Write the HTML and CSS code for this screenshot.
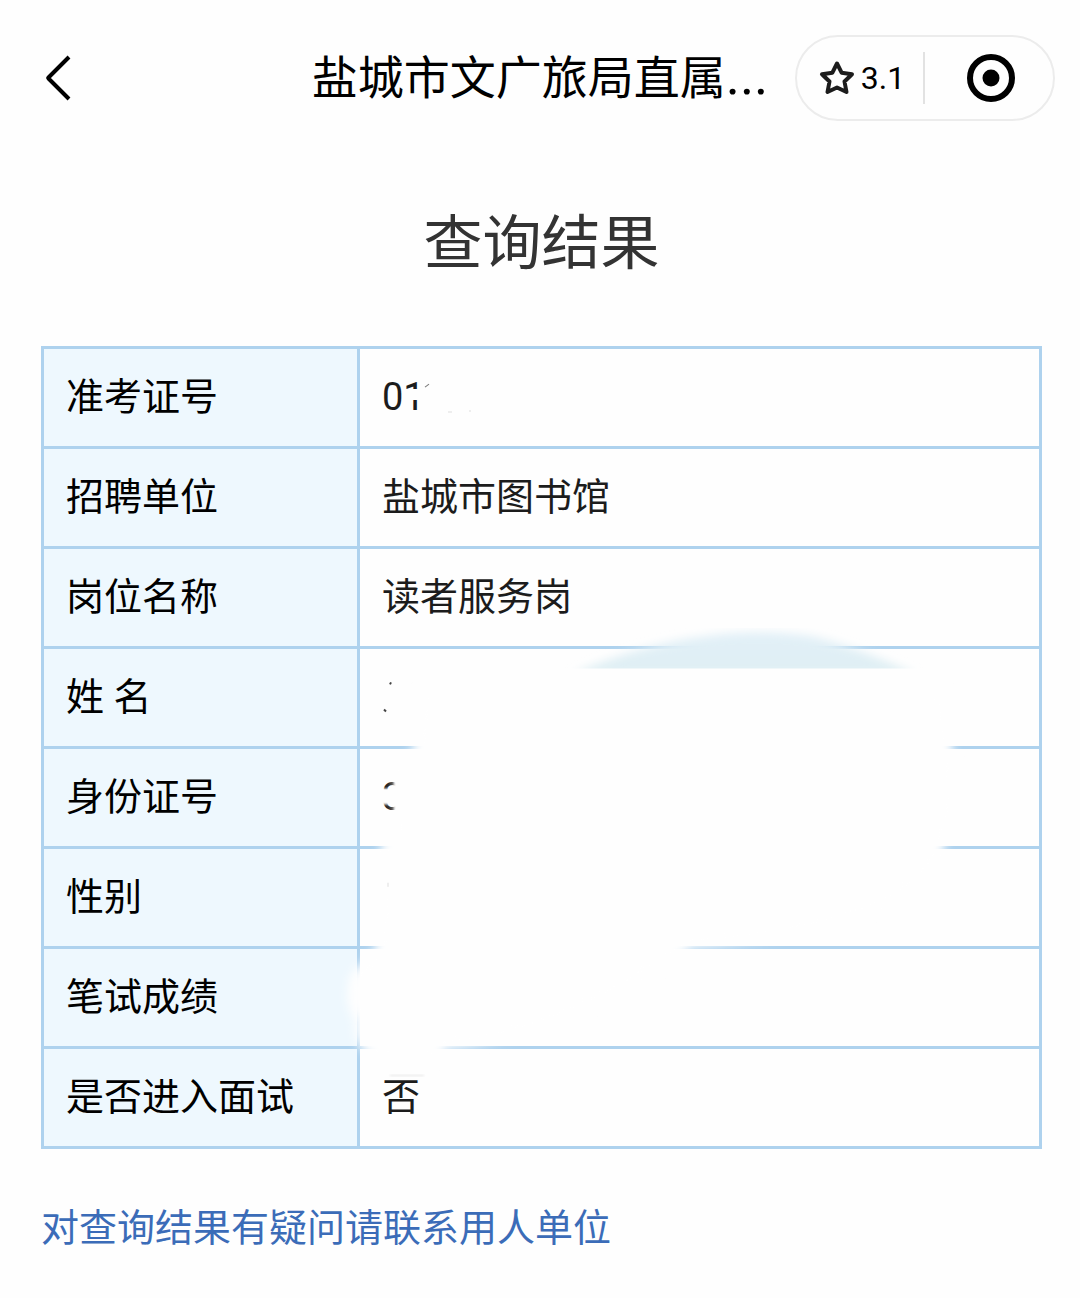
FILE: index.html
```html
<!DOCTYPE html>
<html lang="zh-CN">
<head>
<meta charset="utf-8">
<meta name="viewport" content="width=device-width, initial-scale=1">
<title>查询结果</title>
<link rel="stylesheet" href="styles.css">
</head>
<body>
<header class="nav">
  <button class="back" type="button" aria-label="返回">
    <svg width="30" height="48" viewBox="0 0 30 48" fill="none" stroke="#000" stroke-width="4" stroke-linejoin="round"><path d="M27 3 6.500 23.500Q6 24 6.500 24.500L27 45"/></svg>
  </button>
  <div class="nav-title">盐城市文广旅局直属<span class="dots">...</span></div>
  <div class="capsule">
    <button class="rate" type="button" aria-label="评分 3.1">
      <svg width="36" height="36" viewBox="0 0 36 36" fill="none" stroke="#1c1c1c" stroke-width="4" stroke-linejoin="round"><path d="M18 3.500 22.600 12.700 33 14.200 25.500 21.500 27.500 32 18 27.500 8.500 32 10.500 21.500 3 14.200 13.400 12.700Z"/></svg>
      <span>3.1</span>
    </button>
    <button class="close" type="button" aria-label="关闭">
      <svg width="48" height="48" viewBox="0 0 48 48"><circle cx="24" cy="24" r="21" fill="none" stroke="#000" stroke-width="6"/><circle cx="24" cy="24" r="8.500"/></svg>
    </button>
  </div>
</header>
<main class="page">
  <h1 class="heading">查询结果</h1>
  <div class="result">
    <table class="info">
      <tbody>
        <tr><th scope="row">准考证号</th><td>01</td></tr>
        <tr><th scope="row">招聘单位</th><td>盐城市图书馆</td></tr>
        <tr><th scope="row">岗位名称</th><td>读者服务岗</td></tr>
        <tr><th scope="row">姓 名</th><td></td></tr>
        <tr><th scope="row">身份证号</th><td>3</td></tr>
        <tr><th scope="row">性别</th><td></td></tr>
        <tr><th scope="row">笔试成绩</th><td></td></tr>
        <tr><th scope="row">是否进入面试</th><td>否</td></tr>
      </tbody>
    </table>
    <svg class="cover" viewBox="41 346 1001 802" preserveAspectRatio="none" aria-hidden="true">
      <defs>
        <filter id="soft" x="-10%" y="-10%" width="120%" height="120%"><feGaussianBlur stdDeviation="5"/></filter>
        <filter id="fine" x="-20%" y="-20%" width="140%" height="140%"><feGaussianBlur stdDeviation="1"/></filter>
        <clipPath id="cap"><rect x="540" y="610" width="400" height="58"/></clipPath>
        <linearGradient id="tint" x1="0" y1="0" x2="0" y2="1"><stop offset="0" stop-color="#e2f0f8"/><stop offset="1" stop-color="#dfeff3"/></linearGradient>
      </defs>
      <!-- erased digits of the exam number -->
      <path d="M405 391 412 389H424V400H405Z" fill="#fefefe"/>
      <path d="M425 387 429 384" stroke="#777" stroke-width="1"/>
      <path d="M448 412H452M469 411H471" stroke="#ddd" stroke-width="1"/>
      <!-- tinted arc -->
      <g clip-path="url(#cap)"><path d="M572 674Q640 644 705 636Q760 628 812 636Q855 646 916 674Z" fill="url(#tint)" filter="url(#soft)"/></g>
      <!-- erased personal details -->
      <path d="M420 690H945L952 747Q965 800 944 847Q920 930 692 947Q560 1040 446 1048L438 1060H378L362 1048Q352 1036 355 1020Q345 1005 348 985Q348 972 362 962L376 947 380 900V847L395 825V770L414 747Z" fill="#fefefe" filter="url(#soft)"/>
      <path d="M382 788H412V804H382ZM394 775H412V820H394Z" fill="#fefefe" filter="url(#fine)"/>
      <path d="M390 684 391 682M384 709 386 711" stroke="#444" stroke-width="2"/>
      <path d="M388 882V886" stroke="#ddd" stroke-width="1"/>
      <path d="M390 1074H424V1075H390Z" fill="#ddd" filter="url(#fine)"/>
    </svg>
  </div>
  <a class="contact" href="#contact">对查询结果有疑问请联系用人单位</a>
</main>
</body>
</html>
```
FILE: styles.css
```css
* {
  box-sizing: border-box;
}

body {
  margin: 0;
  background: #fefefe;
  color: #000;
  font-family: Roboto, "Noto Sans CJK SC", sans-serif;
}

button {
  padding: 0;
  border: 0;
  background: none;
  color: inherit;
  font: inherit;
  cursor: pointer;
}

svg {
  display: block;
}

.nav {
  display: grid;
  grid-template-columns: 1fr auto 1fr;
  align-items: center;
  height: 156px;
  padding: 0 25px;
}

.back {
  justify-self: start;
  padding: 0 17px;
}

.nav-title {
  padding-bottom: 8px;
  font-family: "Noto Sans CJK SC", sans-serif;
  font-size: 46px;
  line-height: 60px;
  white-space: nowrap;
}

.dots {
  font-family: Roboto, sans-serif;
  font-size: 54px;
  line-height: 1;
}

.capsule {
  justify-self: end;
  display: grid;
  grid-template-columns: 1fr 1fr;
  align-items: center;
  width: 260px;
  height: 86px;
  border: 2px solid #ececec;
  border-radius: 43px;
}

.rate,
.close {
  display: flex;
  align-items: center;
  justify-content: center;
  height: 52px;
  padding-left: 4px;
}

.rate {
  gap: 6px;
  border-right: 2px solid #e2e2e2;
  font-size: 32px;
}

.page {
  padding: 48px 38px 40px 41px;
}

.heading {
  margin: 0 0 62px;
  color: #333;
  font-size: 59px;
  font-weight: 400;
  line-height: 80px;
  text-align: center;
}

.result {
  position: relative;
}

.info {
  width: 100%;
  border-collapse: collapse;
  table-layout: fixed;
  font-size: 38px;
  line-height: 50px;
}

.info th,
.info td {
  height: 100px;
  padding: 0 22px 2px;
  border: 3px solid #aed2ee;
  font-weight: 400;
  text-align: left;
}

.info th {
  width: 316px;
  background: #eef8fe;
}

.info td {
  color: #1c1c1c;
}

.cover {
  position: absolute;
  inset: 0;
  width: 100%;
  height: 100%;
  pointer-events: none;
}

.contact {
  display: inline-block;
  margin-top: 52px;
  color: #3b6cb8;
  font-size: 38px;
  line-height: 54px;
  text-decoration: none;
}
```
